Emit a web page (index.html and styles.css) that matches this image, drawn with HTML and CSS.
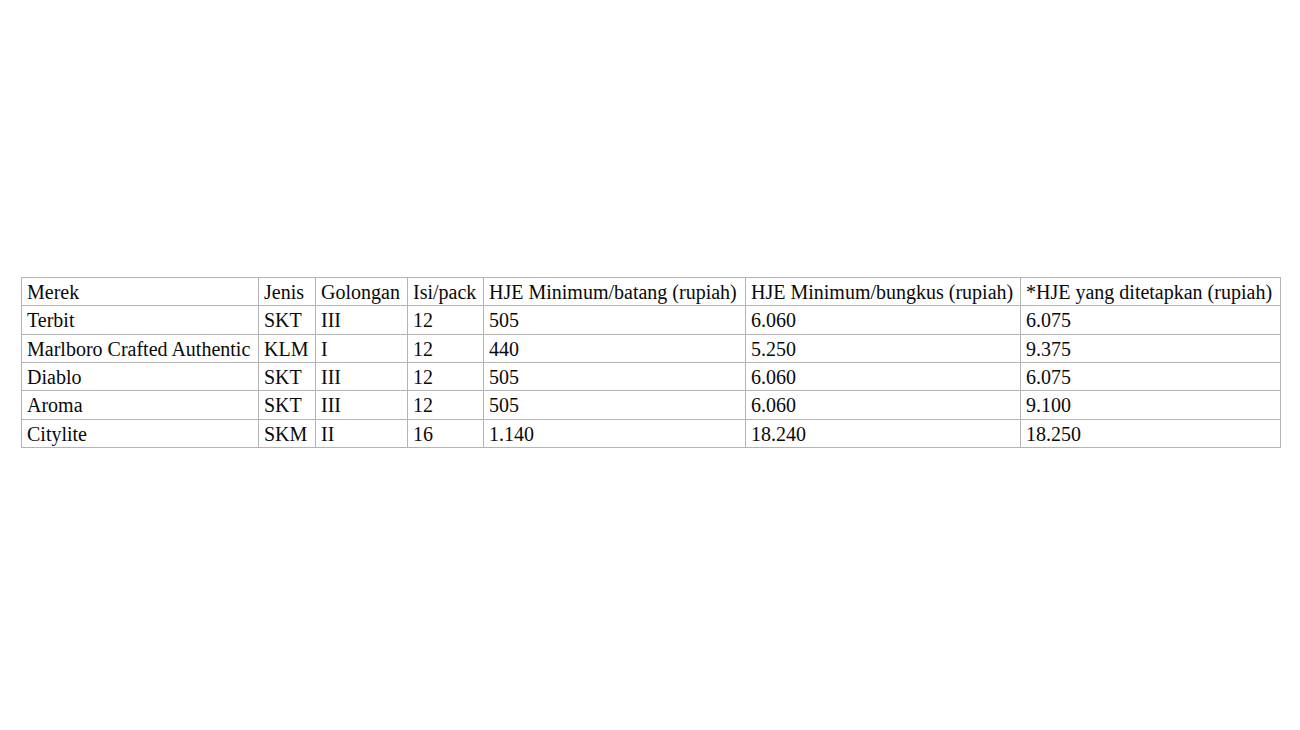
FILE: index.html
```html
<!DOCTYPE html>
<html lang="id">
<head>
<meta charset="utf-8">
<title>HJE Rokok</title>
<link rel="stylesheet" href="styles.css">
</head>
<body>
<main class="page">
<table class="hje">
<colgroup>
<col class="c1"><col class="c2"><col class="c3"><col class="c4"><col class="c5"><col class="c6"><col class="c7">
</colgroup>
<tr><td>Merek</td><td>Jenis</td><td>Golongan</td><td>Isi/pack</td><td>HJE Minimum/batang (rupiah)</td><td>HJE Minimum/bungkus (rupiah)</td><td>*HJE yang ditetapkan (rupiah)</td></tr>
<tr><td>Terbit</td><td>SKT</td><td>III</td><td>12</td><td>505</td><td>6.060</td><td>6.075</td></tr>
<tr><td>Marlboro Crafted Authentic</td><td>KLM</td><td>I</td><td>12</td><td>440</td><td>5.250</td><td>9.375</td></tr>
<tr><td>Diablo</td><td>SKT</td><td>III</td><td>12</td><td>505</td><td>6.060</td><td>6.075</td></tr>
<tr><td>Aroma</td><td>SKT</td><td>III</td><td>12</td><td>505</td><td>6.060</td><td>9.100</td></tr>
<tr><td>Citylite</td><td>SKM</td><td>II</td><td>16</td><td>1.140</td><td>18.240</td><td>18.250</td></tr>
</table>
</main>
</body>
</html>
```
FILE: styles.css
```css
html, body {
  margin: 0;
  padding: 0;
  background: #ffffff;
}
.page {
  padding: 277px 0 0 21px;
}
.hje {
  border-collapse: collapse;
  table-layout: fixed;
  width: 1259px;
  font-family: "Liberation Serif", "Times New Roman", serif;
  font-size: 20px;
  color: #0a0a0a;
  border: 1px solid #a8a8a8;
}
.hje td {
  border: 1px solid #b4b4b4;
  padding: 4px 5px 2px 5px;
  line-height: 21.33px;
  white-space: nowrap;
  overflow: hidden;
  vertical-align: middle;
}
.c1 { width: 237px; }
.c2 { width: 57px; }
.c3 { width: 92px; }
.c4 { width: 76px; }
.c5 { width: 262px; }
.c6 { width: 275px; }
.c7 { width: 260px; }
```
